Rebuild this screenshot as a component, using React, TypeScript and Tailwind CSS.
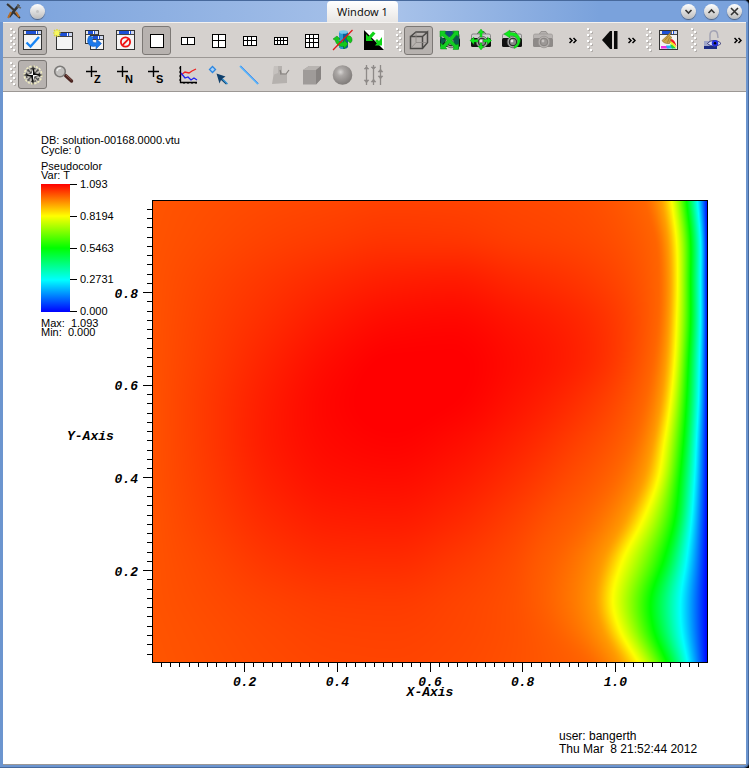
import { useEffect, useRef, type ReactNode } from "react";
import clsx from "clsx";

/* ---------- scalar field ---------- */

const FIELD_W = 556;
const FIELD_H = 463;

// One row per sampled height: green channel of the warm interior at fixed x,
// then the x position of each boundary-layer contour.
const ROWS = [
  { y: 0, warm: [84, 78, 73, 69, 65, 66, 70, 76], edge: [491, 508, 520, 535, 546] },
  { y: 40, warm: [83, 74, 65, 58, 52, 53, 61, 70], edge: [503, 515, 525, 539, 549] },
  { y: 80, warm: [82, 67, 53, 40, 30, 27, 39, 56], edge: [506, 517, 526, 539, 549] },
  { y: 120, warm: [82, 62, 43, 24, 11, 8, 20, 41], edge: [505, 516, 525, 539, 549] },
  { y: 160, warm: [82, 58, 33, 11, -1, -1, 12, 36], edge: [500, 513, 523, 537, 548] },
  { y: 200, warm: [82, 54, 26, 5, -4, 0, 18, 47], edge: [491, 508, 519, 535, 547] },
  { y: 240, warm: [82, 54, 25, 8, 2, 11, 31, 60], edge: [478, 500, 513, 532, 545] },
  { y: 280, warm: [82, 57, 31, 16, 13, 24, 46, 71], edge: [458, 489, 506, 528, 543] },
  { y: 320, warm: [83, 62, 41, 29, 27, 39, 62, 81], edge: [431, 470, 491, 523, 540] },
  { y: 360, warm: [83, 69, 53, 44, 43, 55, 74, 87], edge: [406, 449, 471, 512, 535] },
  { y: 400, warm: [83, 74, 65, 59, 58, 66, 79, 88], edge: [398, 441, 461, 499, 529] },
  { y: 430, warm: [84, 77, 70, 65, 64, 69, 79, 87], edge: [408, 448, 468, 502, 530] },
  { y: 462, warm: [85, 79, 73, 69, 68, 72, 80, 88], edge: [432, 465, 486, 515, 536] },
];

const EDGE_VALUES = [4 - 100 / 255, 4 - 150 / 255, 3, 2, 1];

// Hermite interpolation through (xs, ys); monotone keeps it from overshooting
function spline(xs: number[], ys: number[], monotone = false) {
  const n = xs.length;
  const slope = xs.slice(1).map((x, i) => (ys[i + 1] - ys[i]) / (x - xs[i]));
  const tangent = xs.map((_, i) => {
    if (i === 0) return slope[0];
    if (i === n - 1) return slope[n - 2];
    const a = slope[i - 1];
    const b = slope[i];
    if (!monotone) return (a + b) / 2;
    return a * b <= 0 ? 0 : (2 * a * b) / (a + b);
  });
  return (x: number) => {
    let i = 0;
    while (i < n - 2 && x > xs[i + 1]) i++;
    const h = xs[i + 1] - xs[i];
    const t = (x - xs[i]) / h;
    const t2 = t * t;
    const t3 = t2 * t;
    return (
      (2 * t3 - 3 * t2 + 1) * ys[i] +
      (t3 - 2 * t2 + t) * h * tangent[i] +
      (3 * t2 - 2 * t3) * ys[i + 1] +
      (t3 - t2) * h * tangent[i + 1]
    );
  };
}

// 0 blue, 1 cyan, 2 green, 3 yellow, 4 red
function hot(v: number): [number, number, number] {
  const c = Math.max(0, Math.min(4, v));
  if (c < 1) return [0, c * 255, 255];
  if (c < 2) return [0, 255, (2 - c) * 255];
  if (c < 3) return [(c - 2) * 255, 255, 0];
  return [255, (4 - c) * 255, 0];
}

function paintField(ctx: CanvasRenderingContext2D) {
  const image = ctx.createImageData(FIELD_W, FIELD_H);
  const ys = ROWS.map((r) => r.y);
  const warm = ROWS[0].warm.map((_, k) => spline(ys, ROWS.map((r) => r.warm[k])));
  const edge = ROWS[0].edge.map((_, k) => spline(ys, ROWS.map((r) => r.edge[k])));

  for (let y = 0; y < FIELD_H; y++) {
    const edges = edge.map((f) => f(y));
    const xs = [0, 60, 120, 180, 240, 300, 360, (360 + edges[0]) / 2, ...edges, FIELD_W];
    const vs = [...warm.map((f) => 4 - f(y) / 255), ...EDGE_VALUES, 0];
    const row = spline(xs, vs, true);
    for (let x = 0; x < FIELD_W; x++) {
      const [r, g, b] = hot(row(x));
      image.data.set([r, g, b, 255], (y * FIELD_W + x) * 4);
    }
  }
  ctx.putImageData(image, 0, 0);
}

const Field = () => {
  const ref = useRef<HTMLCanvasElement>(null);

  useEffect(() => {
    const ctx = ref.current?.getContext("2d");
    if (ctx) paintField(ctx);
  }, []);

  return (
    <div className="border border-black">
      <canvas ref={ref} width={FIELD_W} height={FIELD_H} aria-label="Temperature" className="block w-full" />
    </div>
  );
};

/* ---------- axes ---------- */

const AXIS_TEXT = "font-['Liberation_Mono',monospace] text-[13px] font-bold italic";
const steps = (n: number) => Array.from({ length: n }, (_, i) => i + 1);

const YAxis = () => (
  <svg className="block h-full w-full overflow-visible" shapeRendering="crispEdges">
    {steps(49).map((i) => {
      const y = `${100 - i * 2}%`;
      const major = i % 10 === 0;
      return <line key={i} x1={major ? 76 : 80} x2={85} y1={y} y2={y} stroke="#000" />;
    })}
    {[0.2, 0.4, 0.6, 0.8].map((v) => (
      <text key={v} x={71} y={`${100 - v * 100}%`} dy={5} textAnchor="end" className={AXIS_TEXT}>
        {v.toFixed(1)}
      </text>
    ))}
    <text x={0} y="51%" dy={4} className={AXIS_TEXT}>Y-Axis</text>
  </svg>
);

const XAxis = () => (
  <svg className="block h-10 w-full overflow-visible" shapeRendering="crispEdges">
    {steps(59).map((i) => {
      const x = `${(i * 100) / 60}%`;
      return <line key={i} x1={x} x2={x} y1={0} y2={i % 10 === 0 ? 9 : 4} stroke="#000" />;
    })}
    {[0.2, 0.4, 0.6, 0.8, 1].map((v) => (
      <text key={v} x={`${(v * 100) / 1.2}%`} y={23} textAnchor="middle" className={AXIS_TEXT}>
        {v.toFixed(1)}
      </text>
    ))}
    <text x="50%" y={33} textAnchor="middle" className={AXIS_TEXT}>X-Axis</text>
  </svg>
);

const Legend = () => (
  <div className="text-[11px] leading-[9px]">
    <p>Pseudocolor</p>
    <p>Var: T</p>
    <div className="mt-1 flex h-32">
      <div className="w-[29px] bg-[linear-gradient(#f00,#ff0,#0f0,#0ff,#00f)]" />
      <ul className="-my-1 flex flex-col justify-between">
        {["1.093", "0.8194", "0.5463", "0.2731", "0.000"].map((v) => (
          <li key={v} className="flex items-center gap-[3px]">
            <span className="h-px w-[7px] bg-black" />
            {v}
          </li>
        ))}
      </ul>
    </div>
    <p className="mt-[7px] whitespace-pre">Max:  1.093</p>
    <p className="whitespace-pre">Min:  0.000</p>
  </div>
);

/* ---------- icons ---------- */

const Icon = ({ children }: { children: ReactNode }) => (
  <svg width="20" height="20" viewBox="0 0 20 20" className="shrink-0 overflow-visible" aria-hidden="true">
    {children}
  </svg>
);

const MiniWindow = ({ x = 0, y = 0, w = 19, h = 19 }: { x?: number; y?: number; w?: number; h?: number }) => (
  <g shapeRendering="crispEdges">
    <rect x={x + 0.5} y={y + 0.5} width={w - 1} height={h - 1} fill="#f4f4f4" stroke="#333" />
    <rect x={x + 1} y={y + 1} width={w - 2} height={3} fill="#1c50d8" />
    <rect x={x + 1} y={y + 1} width={2} height={3} fill="#e8e8e8" />
    <rect x={x + w - 6} y={y + 1} width={1} height={3} fill="#fff" />
    <rect x={x + w - 4} y={y + 1} width={3} height={3} fill="#cfd8ee" />
    <rect x={x + 1} y={y + 4} width={w - 2} height={1} fill="#444" />
  </g>
);

const ActiveWindow = () => (
  <Icon>
    <MiniWindow h={20} />
    <path d="M3.5 12.5 7.5 16.5 16 7" fill="none" stroke="#1684f5" strokeWidth="2.4" />
  </Icon>
);

const NewWindow = () => (
  <Icon>
    <MiniWindow x={2} y={2} w={17} h={18} />
    <path d="M3-1v8M-1 3h8M0 0l6 6M6 0 0 6" stroke="#dcd820" strokeWidth="1.2" />
    <circle cx="3" cy="3" r="2.5" fill="#f7f75a" />
  </Icon>
);

const CloneWindow = () => (
  <Icon>
    <MiniWindow w={14} h={14} />
    <MiniWindow x={5} y={5} w={14} h={15} />
    <path d="M4 6C0 13 5 18 11 16V19L16.5 13.500 11.500 9v3.500C8 13.500 6.500 11 8 7Z" fill="#1b78ea" stroke="#0b55b8" strokeWidth=".5" />
  </Icon>
);

const DeleteWindow = () => (
  <Icon>
    <MiniWindow h={20} />
    <circle cx="9.5" cy="12" r="4.6" fill="none" stroke="#f01010" strokeWidth="1.8" />
    <path d="M6.5 15.2 12.7 8.8" stroke="#f01010" strokeWidth="1.8" />
  </Icon>
);

const Layout = ({ cols, rows, cell }: { cols: number; rows: number; cell: number }) => {
  const w = cols * cell + 1;
  const h = rows * cell + 1;
  const x = Math.round((19 - w) / 2);
  const y = Math.round((20 - h) / 2);
  return (
    <Icon>
      <g shapeRendering="crispEdges">
        <rect x={x} y={y} width={w} height={h} fill="#fff" stroke="#000" />
        {steps(cols - 1).map((i) => (
          <rect key={i} x={x + i * cell} y={y} width="1" height={h} />
        ))}
        {steps(rows - 1).map((i) => (
          <rect key={i} x={x} y={y + i * cell} width={w} height="1" />
        ))}
      </g>
    </Icon>
  );
};

const SpinOff = () => (
  <Icon>
    <path d="M6 2v15c1 2.500 8 2.500 9 0V2Z" fill="#0b5f98" />
    <path d="M6 2v15c.7 1.600 2 2 4 2V2Z" fill="#2c98d0" />
    <ellipse cx="10.500" cy="2" rx="4.500" ry="1.800" fill="#74c8ee" />
    <path d="M0 9 4 6l3 3-2 1c1 2 3 2.500 6 2V9.500l4 4.500-4 5v-2.500C6 17 3 14 2 10ZM13.500 6c4-1 6 1.500 5.500 5l-1.500 2-1.500-1-2.500-3Z" fill="#16c81c" stroke="#08860e" strokeWidth=".5" />
    <path d="M0 20 19.500 0" stroke="#e01818" strokeWidth="1.300" />
  </Icon>
);

const InvertBackground = () => (
  <Icon>
    <rect width="20" height="20" fill="#fff" />
    <path d="M0 0 20 20H0Z" fill="#000" />
    <path d="M2 4 4.500 6.500 9 1.500l2.500 2L7 8.500 9 11H2ZM18 7v8.500H11l2-2.500-2-2 2-2 2 2Z" fill="#10d418" />
  </Icon>
);

const Perspective = () => (
  <Icon>
    <path d="M1.500 6.500H13.500L18.500 2v10.500L13.500 18.500H1.500ZM1.500 6.500 7 2h11.500M13.500 6.500v12" fill="none" stroke="#4c4a48" strokeWidth="1.500" />
    <path d="M7 2.500v10h11M2 18 7 12.500" fill="none" stroke="#8b8784" strokeWidth=".8" />
  </Icon>
);

const Camera = ({ grey, children }: { grey?: boolean; children?: ReactNode }) => (
  <Icon>
    <path d="M6 4.500 8 1.500h5l2 3Z" fill={grey ? "#b4b0ae" : "#c8c8c8"} stroke={grey ? "#8e8a88" : "#444"} strokeWidth=".8" />
    <rect x=".5" y="4" width="19" height="5" rx="1.500" fill={grey ? "#b8b4b2" : "#d0d0d0"} stroke={grey ? "#96928f" : "#555"} strokeWidth=".6" />
    <rect x="0" y="8" width="20" height="9" rx="1.500" fill={grey ? "#8e8a88" : "#111"} />
    <circle cx="11" cy="12" r="5.800" fill={grey ? "#b4b0ae" : "#aaa"} stroke={grey ? "#96928f" : "#555"} strokeWidth=".7" />
    <circle cx="11" cy="12" r="3.800" fill={grey ? "#9c9896" : "#888"} stroke={grey ? "#868280" : "#222"} />
    <circle cx="10" cy="11" r="1.400" fill={grey ? "#c8c4c2" : "#e8e8e8"} />
    {children}
  </Icon>
);

const ResetView = () => (
  <Camera>
    <path d="M4 1h8l3 4-6 2-6-2Z" fill="#144a78" />
    <path d="M13 1h6v18h-5ZM0 6l6 4-5 6Z" fill="#0c5a4c" />
    <path d="M0 1 5.500 1 5 3.500 9.500 8 14 2.500 12.500 1H18.500V6.500L16.500 5 12 10.500 16 15l2.500-1v5.500H13L14 17 9.500 13 5.500 17.500 7 19H.500V13L3 15l4-4.500L2.500 6 0 7Z" fill="#12cf22" stroke="#0a8f14" strokeWidth=".5" />
  </Camera>
);

const RecenterView = () => (
  <Camera>
    <path d="M10-1 13 3h-2V7H9V3H7ZM10 20l-3-4h2v-3h2v3h2ZM-1 10.500l4-3.500v2.500h4V12H3v2.500ZM20.500 10.500l-4-3.500v2.500h-4V12h4v2.500Z" fill="#10e81c" stroke="#08a010" strokeWidth=".4" />
  </Camera>
);

const UndoView = () => (
  <Camera>
    <path d="M2 4 8 0v2.500c7-.500 11.500 4.500 10 9.500-.800 3.500-3 5.500-6 6.500v-2c3-2 4-4 3.500-6.500C14.500 7 12 5.500 8 5.500V8Z" fill="#10e81c" stroke="#08a010" strokeWidth=".4" />
  </Camera>
);

const PrevFrame = () => (
  <Icon>
    <path d="M12 1v18h-2L2 10 10 1Z" fill="#0a0a0a" />
    <rect x="14" y="1" width="3.500" height="18" fill="#0a0a0a" />
  </Icon>
);

const ClearPlots = () => (
  <Icon>
    <MiniWindow h={20} />
    <path d="M2 16h6l2 2.500H2Z" fill="#f030e0" />
    <path d="M7 15.500h5l2 3H8Z" fill="#20b8f8" />
    <path d="M11 14.500h3l3 4h-4Z" fill="#20d840" />
    <path d="M11 11c2 0 5 3 6.500 7l-2-1-4.500-4Z" fill="#f8e820" />
    <path d="M11.500 9c3 0 5 3 6 7.500l-2-2.500-4.500-3.500Z" fill="#f01820" />
    <path d="M13.500 0 10.500 5.500l2 1.500-2 6.500C7 14 4 12.500 3 10.500L9 5Z" fill="#cda548" stroke="#8a671c" strokeWidth=".6" />
    <path d="M5.500 10.500 9.500 6M8.500 12.500l2-5" stroke="#8a671c" strokeWidth=".6" />
  </Icon>
);

const LockView = () => (
  <Icon>
    <path d="M6 11V5c0-5.500 7-5.500 7.500-1L14 8" fill="none" stroke="#a4a4b4" strokeWidth="1.500" />
    <rect x="0" y="11" width="13" height="8" fill="#a0a6c8" />
    <rect x="0" y="16" width="13" height="3" fill="#1c2c84" />
    <path d="M3.500 13.500c3-4 10-4 13.500 0-3.500 3.500-10 3.500-13.500 0Z" fill="#d8dcf8" stroke="#202060" strokeWidth=".8" />
    <circle cx="11" cy="13.300" r="3.200" fill="#2430e0" />
    <circle cx="11" cy="13.300" r="1.200" fill="#000" />
  </Icon>
);

const Navigate = () => (
  <Icon>
    <circle cx="10" cy="10" r="8.800" fill="#c4c0b8" stroke="#efebc0" strokeWidth="1.600" strokeDasharray="2.200 1.200" />
    <circle cx="10" cy="10" r="6.500" fill="none" stroke="#444" strokeWidth="1.400" strokeDasharray="1.800 1.600" />
    <path d="M4.500 4.500 15.500 15.500M15.500 4.500 4.500 15.500" stroke="#555" strokeWidth="1.300" />
    <path d="M10 0 11.800 8.200 20 10 11.800 11.800 10 20 8.200 11.800 0 10 8.200 8.200Z" fill="#0a0a0a" />
    <path d="M10 3.500V10H4l4.500-1.500ZM10 16.500V10h6l-4.500 1.500Z" fill="#f5f5f5" />
  </Icon>
);

const Zoom = () => (
  <Icon>
    <path d="M11.500 10.500 17.500 16" stroke="#4a2420" strokeWidth="3.400" strokeLinecap="round" />
    <path d="M12 10 17.500 15" stroke="#8a5a50" strokeWidth="1" />
    <circle cx="6" cy="6.500" r="5.300" fill="#c2c0be" stroke="#7c7a78" strokeWidth="1.600" />
    <path d="M3 6c.500-2 2-3 4-2.800" fill="none" stroke="#eee" strokeWidth="1.300" />
  </Icon>
);

const Pick = ({ letter }: { letter: string }) => (
  <Icon>
    <path d="M6.500 1v11M1 6.500h11" stroke="#000" strokeWidth="1.400" />
    <text x="9" y="18" className="font-['Liberation_Sans',sans-serif] text-[11px] font-bold">{letter}</text>
  </Icon>
);

const Lineout = () => (
  <Icon>
    <path d="M2.500 1v16.500H19" fill="none" stroke="#000" strokeWidth="1.300" />
    <path d="M1 3h2M1 7h2M1 11h2M1 15h2M6 17v2M10 17v2M14 17v2M18 17v2" stroke="#000" />
    <path d="m3 10 4-3 4 1 3-2 4-2" fill="none" stroke="#f02020" strokeWidth="1.300" />
    <path d="m3 8 4 5 3-1 3 3 3-2 3 2" fill="none" stroke="#2020f0" strokeWidth="1.300" />
  </Icon>
);

const PointTool = () => (
  <Icon>
    <path d="M3.500 1.500 6.500 4.500 3.500 7.500.500 4.500Z" fill="#a8d0f8" stroke="#2b86e0" strokeWidth="1.300" />
    <path d="m7.500 8.500 9 3-3 2 5 5-1.500 1-5-4.500-1.500 3.500Z" fill="#10406c" />
    <path d="m13.500 14 5 5" stroke="#3a98d8" strokeWidth="1.200" />
  </Icon>
);

const LineTool = () => (
  <Icon>
    <path d="M0 1 18 19" stroke="#56b4fa" strokeWidth="1.800" />
    <path d="M1 1 18.500 18.500" stroke="#4478e0" strokeWidth=".6" />
  </Icon>
);

const PlaneTool = () => (
  <Icon>
    <path d="M3 1h8v7l5 1v9L1 19 2.500 10Z" fill="#b5b1ae" />
    <path d="M3 1h4v7L2 10Z" fill="#c5c1be" />
    <path d="M9 9h6l3-4M10 8.500 9 5" fill="none" stroke="#85817e" strokeWidth="1.200" />
  </Icon>
);

const BoxTool = () => (
  <Icon>
    <path d="M1 5 7 1h12v13l-5 5.500H1Z" fill="#9f9b99" />
    <path d="M1 5 7 1h12l-5 4Z" fill="#b8b4b1" />
    <path d="M14 5 19 1v13l-5 5.500Z" fill="#878381" />
  </Icon>
);

const SphereTool = () => (
  <Icon>
    <defs>
      <radialGradient id="ball" cx=".4" cy=".35" r=".65">
        <stop offset="0" stopColor="#d8d6d4" />
        <stop offset=".3" stopColor="#aca8a6" />
        <stop offset="1" stopColor="#807c7a" />
      </radialGradient>
    </defs>
    <circle cx="9.500" cy="10" r="9.800" fill="url(#ball)" />
  </Icon>
);

const AxisTool = () => (
  <Icon>
    <path d="M2.500 0v20M9.500 0v20M16.500 0v20" stroke="#8e8a88" strokeWidth="1.300" />
    <path d="M0 4h5L2.500 1.500ZM0 15h5L2.500 18ZM7 2h5L9.500 4.500ZM7 17h5L9.500 14ZM14 7h5L16.500 4ZM14 11h5L16.500 14Z" fill="#8e8a88" stroke="#8e8a88" strokeWidth=".5" />
  </Icon>
);

/* ---------- window chrome ---------- */

const Tool = ({ label, active, disabled, children }: {
  label: string;
  active?: boolean;
  disabled?: boolean;
  children: ReactNode;
}) => (
  <button
    type="button"
    aria-label={label}
    disabled={disabled}
    className={clsx(
      "flex h-[29px] w-[29px] shrink-0 items-center justify-center rounded-[3px] border",
      active ? "border-[#7c7875] bg-[#b7b2af]" : "border-transparent"
    )}
  >
    {children}
  </button>
);

const Grip = () => (
  <svg width="6" height="25" className="shrink-0" shapeRendering="crispEdges" aria-hidden="true">
    {[0, 1, 2, 3, 4, 5, 6, 7].map((i) => (
      <g key={i}>
        <rect x={i % 2 ? 4 : 1} y={i * 3 + 1} width="2" height="2" fill="#b4b0ad" />
        <rect x={i % 2 ? 3 : 0} y={i * 3} width="2" height="2" fill="#fff" />
      </g>
    ))}
  </svg>
);

const More = ({ className }: { className?: string }) => (
  <button type="button" aria-label="More" className={clsx("flex w-3 shrink-0 justify-center", className)}>
    <svg width="8" height="7" viewBox="0 0 8 7" fill="none" stroke="#000" strokeWidth="1.500">
      <path d="m.5 1 2.500 2.500L.5 6M4.500 1 7 3.500 4.500 6" />
    </svg>
  </button>
);

const Group = ({ className, children }: { className?: string; children: ReactNode }) => (
  <div className={clsx("flex shrink-0 items-center gap-0.5", className)}>
    <Grip />
    {children}
  </div>
);

const RoundButton = ({ label, d }: { label: string; d?: string }) => (
  <button
    type="button"
    aria-label={label}
    className="flex h-[15px] w-[15px] items-center justify-center rounded-full bg-linear-to-b from-white to-[#bdbdbd] shadow-[0_1px_1px_#4f5f7a]"
  >
    {d ? (
      <svg width="9" height="9" viewBox="0 0 9 9" fill="none" stroke="#333" strokeWidth="1.600">
        <path d={d} />
      </svg>
    ) : (
      <span className="h-[3px] w-[3px] rounded-full bg-[#c4c4c4]" />
    )}
  </button>
);

const TitleBar = () => (
  <header className="grid h-[22px] grid-cols-[27fr_auto_29fr]">
    <div className="flex items-center gap-2 pl-[3px]">
      <svg width="16" height="16" viewBox="0 0 16 16" aria-hidden="true">
        <path d="M2 1 13 14" stroke="#8c8c8c" strokeWidth="2.500" />
        <path d="M1 1 8 7M7 9l7 6" stroke="#333" strokeWidth="1.800" />
        <path d="M13 2 3 14" stroke="#333" strokeWidth="2.600" />
        <path d="M5 9 2 15M10 9l3 5" stroke="#b8702c" strokeWidth="1.800" />
        <path d="M12 1v3l3 1" fill="none" stroke="#666" strokeWidth="1.600" />
      </svg>
      <RoundButton label="Window menu" />
    </div>
    <h1 className="mt-px rounded-t-[4px] bg-linear-to-b from-white to-[#e8e6e4] px-[10px] font-['Noto_Sans',sans-serif] text-[11px] leading-[21px] text-[#111]">
      Window 1
    </h1>
    <div className="flex items-center justify-end gap-2 pr-1">
      <RoundButton label="Minimize" d="m1.500 3 3 3 3-3" />
      <RoundButton label="Maximize" d="m1.500 6 3-3 3 3" />
      <RoundButton label="Close" d="m1 1 7 7M8 1 1 8" />
    </div>
  </header>
);

const TOOLBAR = "flex h-[34px] items-center overflow-hidden border-b border-[#9c9895] bg-[#d5d1ce] pl-[7px]";

export default function App() {
  return (
    <div className="flex min-h-screen flex-col bg-black font-['Liberation_Sans',sans-serif] text-black">
      <div className="flex flex-1 flex-col rounded-r-[5px] bg-[#6c95cf] bg-[linear-gradient(90deg,#7aa2dc,#a9c3ea_52%,#7aa2dc_80%)] bg-size-[100%_22px] bg-no-repeat px-[3px] pb-[3px] shadow-[inset_0_1px_0_#47699c,inset_-1px_-1px_0_#47699c]">
        <TitleBar />

        <div role="toolbar" aria-label="Window" className={clsx(TOOLBAR, "box-content border-t border-t-[#f4f2f0]")}>
          <Group>
            <Tool label="Active window" active><ActiveWindow /></Tool>
            <Tool label="New window"><NewWindow /></Tool>
            <Tool label="Clone window"><CloneWindow /></Tool>
            <Tool label="Delete window"><DeleteWindow /></Tool>
            <Tool label="1x1 layout" active><Layout cols={1} rows={1} cell={12} /></Tool>
            <Tool label="1x2 layout"><Layout cols={2} rows={1} cell={6} /></Tool>
            <Tool label="2x2 layout"><Layout cols={2} rows={2} cell={6} /></Tool>
            <Tool label="2x3 layout"><Layout cols={3} rows={2} cell={4} /></Tool>
            <Tool label="2x4 layout"><Layout cols={4} rows={2} cell={3} /></Tool>
            <Tool label="3x3 layout"><Layout cols={3} rows={3} cell={4} /></Tool>
            <Tool label="Spin"><SpinOff /></Tool>
            <Tool label="Invert background"><InvertBackground /></Tool>
          </Group>
          <Group className="ml-2">
            <Tool label="Perspective" active><Perspective /></Tool>
            <Tool label="Reset view"><ResetView /></Tool>
            <Tool label="Recenter view"><RecenterView /></Tool>
            <Tool label="Undo view"><UndoView /></Tool>
            <Tool label="Redo view" disabled><Camera grey /></Tool>
            <More className="ml-2" />
          </Group>
          <Group className="ml-2">
            <Tool label="Previous frame"><PrevFrame /></Tool>
            <More />
          </Group>
          <Group className="ml-2">
            <Tool label="Clear plots"><ClearPlots /></Tool>
          </Group>
          <Group className="ml-2">
            <Tool label="Lock view"><LockView /></Tool>
            <More className="ml-0.5" />
          </Group>
        </div>

        <div role="toolbar" aria-label="Tools" className={TOOLBAR}>
          <Group>
            <Tool label="Navigate" active><Navigate /></Tool>
            <Tool label="Zoom"><Zoom /></Tool>
            <Tool label="Zone pick"><Pick letter="Z" /></Tool>
            <Tool label="Node pick"><Pick letter="N" /></Tool>
            <Tool label="Spreadsheet pick"><Pick letter="S" /></Tool>
            <Tool label="Lineout"><Lineout /></Tool>
            <Tool label="Point tool"><PointTool /></Tool>
            <Tool label="Line tool"><LineTool /></Tool>
            <Tool label="Plane tool" disabled><PlaneTool /></Tool>
            <Tool label="Box tool" disabled><BoxTool /></Tool>
            <Tool label="Sphere tool" disabled><SphereTool /></Tool>
            <Tool label="Axis tool" disabled><AxisTool /></Tool>
          </Group>
        </div>

        <main className="flex flex-1 flex-col border-b border-[#9c9895] bg-white px-[38px] pt-[43px] pb-2">
          <div className="text-[11px] leading-[10px]">
            <p>DB: solution-00168.0000.vtu</p>
            <p>Cycle: 0</p>
          </div>

          <div className="mt-[7px] grid grid-cols-[111px_1fr]">
            <div className="col-start-1 row-span-2 row-start-1 self-start">
              <Legend />
            </div>
            <div className="col-start-1 row-start-1 mt-[38px] pl-[26px]">
              <YAxis />
            </div>
            <div className="col-start-2 row-start-1 mt-[38px]">
              <Field />
            </div>
            <div className="col-start-2 row-start-2">
              <XAxis />
            </div>
          </div>

          <footer className="mt-auto w-[149px] self-end text-[12px] leading-[13px] whitespace-pre">
            <p>user: bangerth</p>
            <p>Thu Mar  8 21:52:44 2012</p>
          </footer>
        </main>
      </div>
    </div>
  );
}
